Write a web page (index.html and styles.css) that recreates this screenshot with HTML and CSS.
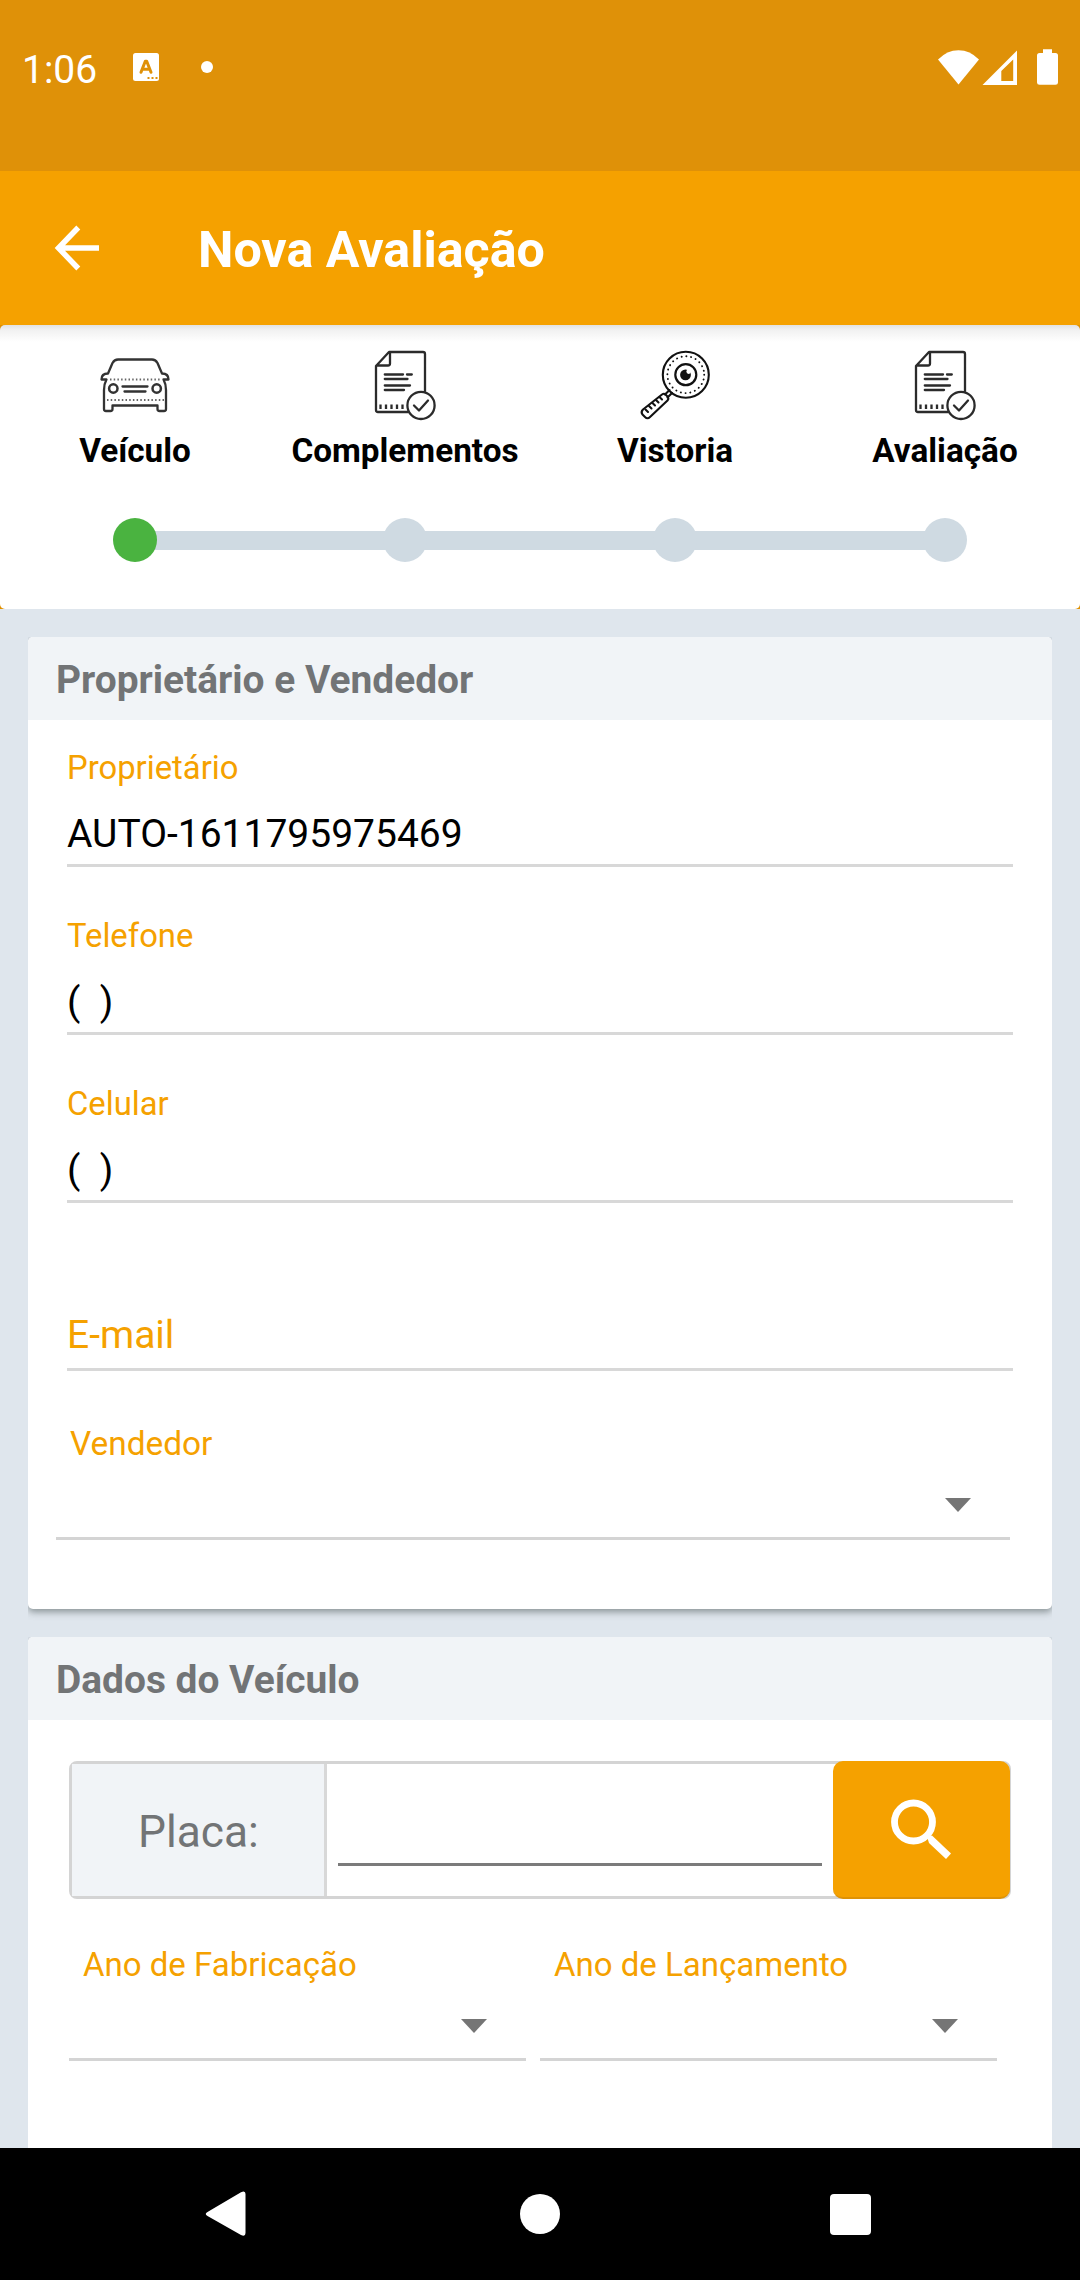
FILE: index.html
```html
<!DOCTYPE html>
<html lang="pt-BR">
<head>
<meta charset="utf-8">
<title>Nova Avaliação</title>
<link rel="stylesheet" href="styles.css">
</head>
<body>
<svg class="defs" aria-hidden="true">
  <symbol id="doc" viewBox="0 0 80 85">
    <g fill="none" stroke="#2b2b2b" stroke-width="2.300" stroke-linecap="round" stroke-linejoin="round">
      <path d="M43 72H13Q11 72 11 70V26L24 12H58Q60 12 60 14V51M11.500 25.500H23Q25 25.500 25 23.500V12"/>
      <path d="M19.800 34.500H38M42 34.500H46.800M19.800 39H42.500M19.800 45.500H45M19.800 50H39"/>
      <path d="M15.500 64.500V69M21 64.500V69M26.500 64.500V69M32 64.500V69M37.500 64.500V69" stroke-linecap="butt"/>
      <circle cx="56" cy="65.400" r="13.600"/>
      <path d="M49 65.500L54 70.500L63 60.500"/>
    </g>
  </symbol>
</svg>
<header class="status">
  <span class="time">1:06</span>
  <svg class="keyboard" width="26" height="28" viewBox="0 0 26 28"><rect width="26" height="28" rx="2.500" fill="#fff"/><path d="M8 19.300L12.300 8.300H13.700L18 19.300M10 16.200H16" fill="none" stroke="#df9108" stroke-width="3" stroke-linejoin="round" stroke-linecap="round"/><path d="M14.500 25h2M18.500 25h2M22.500 25h2" stroke="#df9108" stroke-width="2"/></svg>
  <i class="dot"></i>
  <svg class="signals" width="122" height="40" viewBox="937 47 122 40" fill="#fff"><path d="M938 59.500Q947 50.200 958.500 50.200T979 59.500L958.500 84.500Z"/><path fill-rule="evenodd" d="M982.500 85L1017 50.500V85ZM1001.300 81H1013.200V59.500L1001.300 71Z"/><path d="M1043 49.300h9v3.700h3.500q2.500 0 2.500 2.500v27q0 2.300-2.500 2.300h-16q-2.500 0-2.500-2.300v-27q0-2.500 2.500-2.500h3.500z"/></svg>
</header>
<div class="appbar">
  <svg width="46" height="46" viewBox="0 0 46 46" fill="none" stroke="#fff" stroke-width="5.500"><path d="M45 23H5M24.300 2.500L4.500 23L24.300 43.500"/></svg>
  <h1>Nova Avaliação</h1>
</div>
<div class="stepper-wrap">
<nav class="stepper">
  <div class="step">
    <svg width="90" height="85" viewBox="0 0 90 85" fill="none" stroke="#333" stroke-width="2.300" stroke-linejoin="round">
      <path d="M18 33.500L22.500 23Q24.500 19.500 28 19.500H62Q65.500 19.500 67.500 23L72 33.500C77 33.500 78.500 36 78.500 39.500H73.500Q76 44 76 50V69Q76 71 74 71H69.500Q67.500 71 67.500 69V65.500H22.500V69Q22.500 71 20.500 71H16Q14 71 14 69V50Q14 44 16.500 39.500H11.500C11.500 36 13 33.500 18 33.500Z"/>
      <path d="M20 39.500H71M17 60H74" stroke-width="1.800" stroke-dasharray="1.500 2.200" stroke="#666"/>
      <circle cx="23.300" cy="48.500" r="4.200" stroke-width="2.500"/><circle cx="66.700" cy="48.500" r="4.200" stroke-width="2.500"/>
      <path d="M32.500 46.500H57.500M34.500 51.500H55.500" stroke-linecap="round"/>
    </svg>
    <span>Veículo</span><i class="node active"></i>
  </div>
  <div class="step"><svg width="80" height="85"><use href="#doc"/></svg><span>Complementos</span><i class="node"></i></div>
  <div class="step">
    <svg width="90" height="85" viewBox="0 0 90 85" fill="none" stroke="#111" stroke-width="2.100" stroke-linejoin="round" stroke-linecap="round">
      <circle cx="55.800" cy="34.700" r="23"/>
      <circle cx="55.800" cy="34.700" r="18.400" stroke-width="1.900" stroke-dasharray="0.100 4.717"/>
      <circle cx="55.800" cy="34.700" r="10.500" stroke-width="2.200"/>
      <circle cx="55.500" cy="34.900" r="5.400" fill="#111" stroke="none"/><circle cx="58.700" cy="31.600" r="2.300" fill="#fff" stroke="none"/>
      <path d="M39.500 50L35 54.500M42 53L37.500 57.500"/>
      <path d="M32 54.500Q34 53 35.500 54.500L38 57Q39 58.500 37.500 60.500L20 77Q17.500 79.500 15 77L12.500 74.500Q10.500 72 13 69.500Z"/>
      <path d="M15.500 69.500L18 72M19 66L21.500 68.500M22.500 63L25 65.500M26 60L28.500 62.500M29.500 57L32 59.500"/>
    </svg>
    <span>Vistoria</span><i class="node"></i>
  </div>
  <div class="step"><svg width="80" height="85"><use href="#doc"/></svg><span>Avaliação</span><i class="node"></i></div>
</nav>
</div>
<main>
  <section class="card owner">
    <h2>Proprietário e Vendedor</h2>
    <div class="fields">
      <div class="field"><label>Proprietário</label><p>AUTO-1611795975469</p></div>
      <div class="field"><label>Telefone</label><p>(&nbsp; )</p></div>
      <div class="field"><label>Celular</label><p>(&nbsp; )</p></div>
      <div class="field empty"><p>E-mail</p></div>
    </div>
    <div class="select seller"><label>Vendedor</label><i class="caret"></i></div>
  </section>
  <section class="card vehicle">
    <h2>Dados do Veículo</h2>
    <div class="plate">
      <label>Placa:</label>
      <div class="entry"></div>
      <button type="button" aria-label="Buscar"><svg width="64" height="64" viewBox="0 0 64 64" fill="none" stroke="#fff"><circle cx="23.500" cy="25" r="19" stroke-width="6.800"/><path d="M37 39.500L42 38.500L61 56.500L56 62L39 46Z" fill="#fff" stroke="none"/></svg></button>
    </div>
    <div class="years">
      <div class="select"><label>Ano de Fabricação</label><i class="caret"></i></div>
      <div class="select"><label>Ano de Lançamento</label><i class="caret"></i></div>
    </div>
  </section>
</main>
<footer class="navbar">
  <svg width="42" height="48" viewBox="0 0 42 48" fill="#fff"><path d="M2.500 22L36 2.200Q40.500 0 40.500 4V43Q40.500 47 36 45L2.500 26Q-1 24 2.500 22Z"/></svg>
  <i class="home"></i>
  <i class="recent"></i>
</footer>
</body>
</html>
```
FILE: styles.css
```css
* { box-sizing: border-box; margin: 0; padding: 0; }
body {
  width: 1080px; height: 2280px; overflow: hidden;
  display: flex; flex-direction: column;
  font-family: Roboto, "Noto Sans", sans-serif;
  background: #dfe6ed; color: #000;
}
svg { display: block; flex: none; }
.defs { width: 0; height: 0; position: absolute; }

.status { flex: none; height: 171px; background: #df9108; color: #fff; display: flex; align-items: flex-start; padding: 47px 21px 0 22px; }
.time { width: 111px; font-size: 39px; line-height: 46px; }
.keyboard { margin-top: 6px; }
.dot { width: 12px; height: 12px; border-radius: 50%; background: #fff; margin: 14px 0 0 42px; }
.signals { margin-left: auto; }

.appbar { flex: none; height: 154px; background: #f5a100; color: #fff; display: flex; align-items: center; padding-left: 54px; gap: 98px; }
.appbar h1 { font-size: 50.200px; line-height: 60px; font-weight: 700; padding-top: 4px; }

.stepper-wrap { flex: none; background: #e09000; }
.stepper {
  position: relative; z-index: 0;
  height: 284px; border-radius: 5px; padding-top: 15px;
  display: grid; grid-template-columns: repeat(4, 1fr);
  background: linear-gradient(#e2e2e2, #f1f1f1 5px, #fff 17px);
}
.step { display: flex; flex-direction: column; align-items: center; }
.step span { font-size: 33.300px; line-height: 40px; font-weight: 700; margin-top: 6px; }
.node { width: 44px; height: 44px; border-radius: 50%; background: #cfdae2; margin-top: 47px; position: relative; }
.step:not(:last-child) .node::after { content: ""; position: absolute; z-index: -1; left: 22px; top: 12.500px; width: 270px; height: 19px; background: #cfdae2; }
.node.active { background: #4ab340; }

main { flex: 1; min-height: 0; overflow: hidden; padding: 28px 28px 0; display: flex; flex-direction: column; gap: 28px; }
.card { flex: none; background: #fff; border-radius: 5px; box-shadow: 0 3px 7px rgba(70, 80, 80, .55); clip-path: inset(0 0 -14px 0); }
.card h2 { height: 83px; line-height: 86px; padding-left: 28px; border-radius: 5px 5px 0 0; font-size: 38.900px; font-weight: 700; color: #727476; background: #f1f4f7; }
.owner { height: 972px; }
.vehicle { height: 560px; }

.fields { padding: 0 39px; }
.field { height: 168px; border-bottom: 3px solid #d8d8d8; display: flex; flex-direction: column; justify-content: flex-end; }
.field:first-child { height: 147px; }
label { color: #f5a100; font-size: 33px; line-height: 40px; }
.field label { font-size: 32.800px; }
.field p { font-size: 39px; line-height: 46px; margin: 23px 0 7px; }
.field.empty p { color: #f5a100; margin-bottom: 10px; }

.select { border-bottom: 3px solid #d4d4d4; display: flex; justify-content: space-between; }
.caret { width: 0; height: 0; border: solid transparent; border-width: 14px 13.500px 0; border-top-color: #757575; }
.seller { margin: 0 42px 0 28px; height: 169px; padding: 53px 39px 0 14px; }
.seller label { font-size: 33.400px; }
.seller .caret { margin-top: 74px; }

.plate { margin: 41px 41px 0; height: 138px; border: 3px solid #d4d4d4; border-radius: 8px; display: flex; }
.plate label { width: 255px; background: #f1f4f7; border-right: 3px solid #d8d8d8; color: #727476; font-size: 44.300px; line-height: 136px; padding-left: 66px; }
.entry { flex: 1; margin: 0 11px 30px; border-bottom: 3px solid #7b7b7b; }
.plate button { width: 177px; margin: -3px -2px -3px 0; border: 0; border-bottom: 2px solid #de9205; border-radius: 10px; background: #f5a100; display: grid; place-items: center; }
.years { margin: 0 55px 0 41px; display: grid; grid-template-columns: 457px 457px; justify-content: space-between; }
.years .select { height: 162px; padding: 46px 39px 0 14px; }
.years .caret { margin-top: 74px; }

.navbar { flex: none; height: 132px; background: #000; display: flex; align-items: center; justify-content: space-between; padding: 0 209px 0 205px; }
.home { width: 40px; height: 40px; border-radius: 50%; background: #fff; margin-left: 2px; }
.recent { width: 41px; height: 41px; border-radius: 4px; background: #fff; }
```
